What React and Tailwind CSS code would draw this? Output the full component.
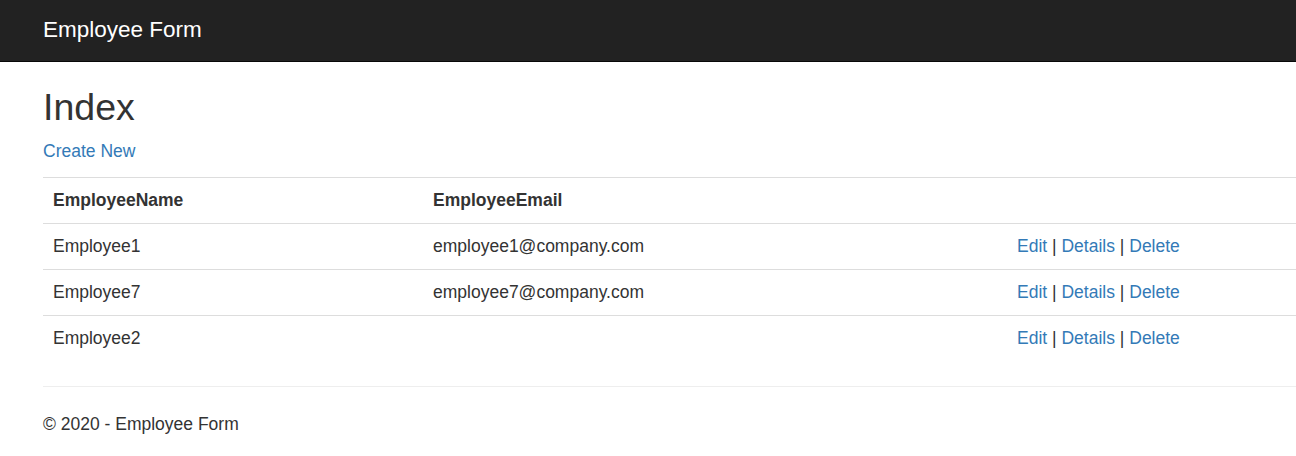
export default function App() {
  const rows = [
    { name: "Employee1", email: "employee1@company.com" },
    { name: "Employee7", email: "employee7@company.com" },
    { name: "Employee2", email: "" },
  ];

  return (
    <div className="min-h-screen bg-white text-[#333] text-[17.5px] leading-[25px] font-['Liberation_Sans',Arial,sans-serif] overflow-hidden">
      {/* navbar */}
      <div className="h-[62px] bg-[#222] border-b border-[#080808] flex items-center pl-[43px]">
        <span className="text-white text-[22.5px] leading-[25px] -mt-[2px]">Employee Form</span>
      </div>

      <div className="pl-[43px]">
        <h2 className="text-[37.5px] leading-[41px] mt-[25px] mb-[11px]">Index</h2>
        <p className="mb-[13px]">
          <a className="text-[#337ab7]">Create New</a>
        </p>

        <table className="w-full border-collapse">
          <colgroup>
            <col className="w-[380px]" />
            <col className="w-[584px]" />
            <col />
          </colgroup>
          <tbody>
            <tr>
              <th className="text-left font-bold p-[10px] border-t border-[#ddd]">EmployeeName</th>
              <th className="text-left font-bold p-[10px] border-t border-[#ddd]">EmployeeEmail</th>
              <th className="p-[10px] border-t border-[#ddd]"></th>
            </tr>
            {rows.map((r) => (
              <tr key={r.name}>
                <td className="p-[10px] border-t border-[#ddd]">{r.name}</td>
                <td className="p-[10px] border-t border-[#ddd]">{r.email}</td>
                <td className="p-[10px] border-t border-[#ddd]">
                  <a className="text-[#337ab7]">Edit</a> |{" "}
                  <a className="text-[#337ab7]">Details</a> |{" "}
                  <a className="text-[#337ab7]">Delete</a>
                </td>
              </tr>
            ))}
          </tbody>
        </table>

        <hr className="mt-[25px] border-t border-[#eee]" />
        <footer className="mt-[25px]">
          <p>© 2020 - Employee Form</p>
        </footer>
      </div>
    </div>
  );
}
